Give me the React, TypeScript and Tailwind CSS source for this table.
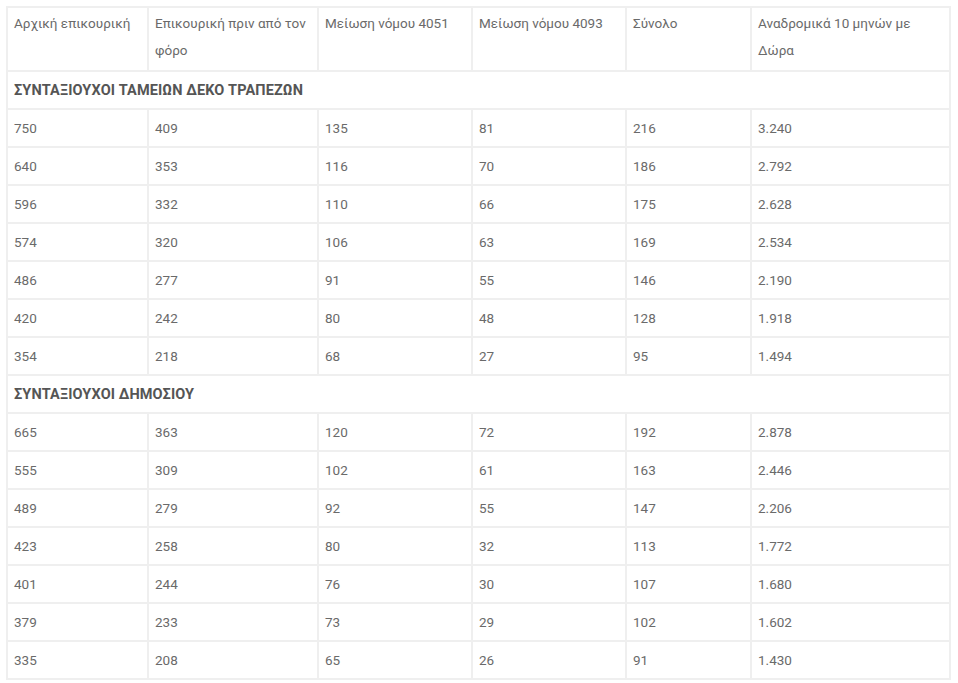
import { Fragment } from 'react';

const headers = [
  'Αρχική επικουρική',
  'Επικουρική πριν από τον φόρο',
  'Μείωση νόμου 4051',
  'Μείωση νόμου 4093',
  'Σύνολο',
  'Αναδρομικά 10 μηνών με Δώρα',
];

const widths = ['w-[141px]', 'w-[170px]', 'w-[154px]', 'w-[154px]', 'w-[125px]', 'w-[199px]'];

const sections = [
  {
    title: 'ΣΥΝΤΑΞΙΟΥΧΟΙ ΤΑΜΕΙΩΝ ΔΕΚΟ ΤΡΑΠΕΖΩΝ',
    rows: [
      ['750', '409', '135', '81', '216', '3.240'],
      ['640', '353', '116', '70', '186', '2.792'],
      ['596', '332', '110', '66', '175', '2.628'],
      ['574', '320', '106', '63', '169', '2.534'],
      ['486', '277', '91', '55', '146', '2.190'],
      ['420', '242', '80', '48', '128', '1.918'],
      ['354', '218', '68', '27', '95', '1.494'],
    ],
  },
  {
    title: 'ΣΥΝΤΑΞΙΟΥΧΟΙ ΔΗΜΟΣΙΟΥ',
    rows: [
      ['665', '363', '120', '72', '192', '2.878'],
      ['555', '309', '102', '61', '163', '2.446'],
      ['489', '279', '92', '55', '147', '2.206'],
      ['423', '258', '80', '32', '113', '1.772'],
      ['401', '244', '76', '30', '107', '1.680'],
      ['379', '233', '73', '29', '102', '1.602'],
      ['335', '208', '65', '26', '91', '1.430'],
    ],
  },
];

const border = 'border-2 border-[#efefef] px-[6px] text-left align-top';

export default function App() {
  return (
    <div className="min-h-screen bg-white pl-[6px] pt-[6px] font-['Roboto','Noto_Sans',sans-serif] text-[13.5px] leading-[27px] text-[#6a6a6a]">
      <table className="w-[944px] table-fixed border-collapse">
        <colgroup>
          {widths.map((w, i) => (
            <col key={i} className={w} />
          ))}
        </colgroup>
        <thead>
          <tr>
            {headers.map(h => (
              <th key={h} className={`${border} pt-[2px] pb-[6px] font-normal`}>
                {h}
              </th>
            ))}
          </tr>
        </thead>
        <tbody>
          {sections.map(section => (
            <Fragment key={section.title}>
              <tr>
                <td
                  colSpan={6}
                  className={`${border} pt-[5px] pb-[4px] text-[14.5px] font-bold tracking-[0.1px] text-[#555]`}
                >
                  {section.title}
                </td>
              </tr>
              {section.rows.map(row => (
                <tr key={row[0]}>
                  {row.map((v, i) => (
                    <td key={i} className={`${border} pt-[5px] pb-[4px]`}>
                      {v}
                    </td>
                  ))}
                </tr>
              ))}
            </Fragment>
          ))}
        </tbody>
      </table>
    </div>
  );
}
